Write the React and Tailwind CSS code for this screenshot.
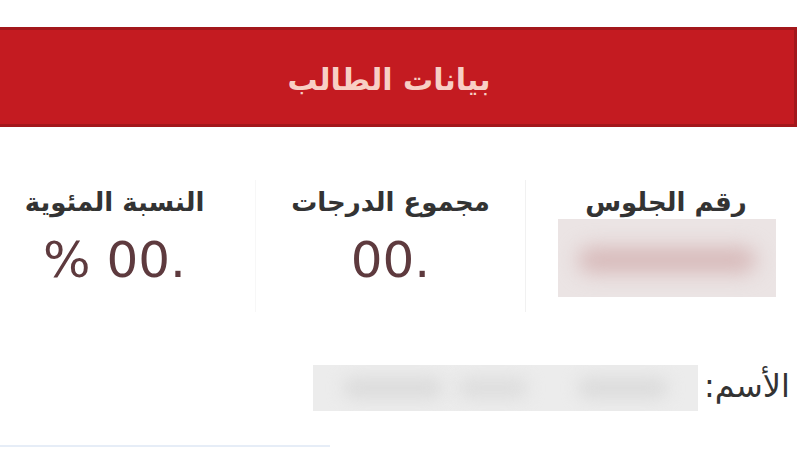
export default function App() {
  const font = { fontFamily: '"DejaVu Sans", sans-serif' }
  return (
    <div dir="rtl" style={font} className="relative h-[450px] w-[800px] overflow-hidden bg-white">
      <div className="h-[27px]" />
      <div className="mr-[3px] flex h-[100px] items-center justify-center border-y-[3px] border-r-[3px] border-[#a3171b] bg-[#c41b21] pr-[16px]">
        <h1 className="pt-[4px] text-[30px] font-bold tracking-[-0.5px] text-[#f8cfc5]">بيانات الطالب</h1>
      </div>

      <div className="mt-[53px] flex h-[132px]">
        <div className="flex w-[275px] flex-col items-center border-l border-[#f1f1f1]">
          <div className="ml-[6px] text-[26px] font-bold leading-[44px] text-[#333]">رقم الجلوس</div>
          <div className="relative ml-[8px] mt-[-5px] h-[78px] w-[218px] overflow-hidden bg-[#ebe4e4]">
            <div className="absolute left-[20px] right-[20px] top-[28px] h-[26px] rounded-full bg-[#d7b9b9] blur-[10px]" />
          </div>
        </div>
        <div className="flex w-[270px] flex-col items-center border-l border-[#f7f7f7]">
          <div className="text-[26px] font-bold leading-[44px] text-[#333]">مجموع الدرجات</div>
          <div dir="ltr" className="mt-[6px] text-[50px] leading-[60px] text-[#5e3a3e]">00.</div>
        </div>
        <div className="flex w-[255px] flex-col items-center pr-[26px]">
          <div className="text-[26px] font-bold leading-[44px] text-[#333]">النسبة المئوية</div>
          <div dir="ltr" className="mt-[6px] text-[50px] leading-[60px] text-[#5e3a3e]">% 00.</div>
        </div>
      </div>

      <div className="mt-[50px] flex items-center gap-[6px] pr-[10px]">
        <div className="pb-[4px] text-[32px] text-[#333]">الأسم:</div>
        <div className="relative h-[46px] w-[385px] overflow-hidden bg-[#ececec]">
          <div className="absolute right-[30px] top-[12px] h-[22px] w-[90px] rounded-full bg-[#dcdcdc] blur-[8px]" />
          <div className="absolute right-[170px] top-[12px] h-[22px] w-[70px] rounded-full bg-[#dedede] blur-[8px]" />
          <div className="absolute left-[30px] top-[12px] h-[22px] w-[100px] rounded-full bg-[#dcdcdc] blur-[8px]" />
        </div>
      </div>

      <div className="absolute bottom-[3px] left-0 h-[2px] w-[330px] bg-[#e6edf7]" />
    </div>
  )
}
